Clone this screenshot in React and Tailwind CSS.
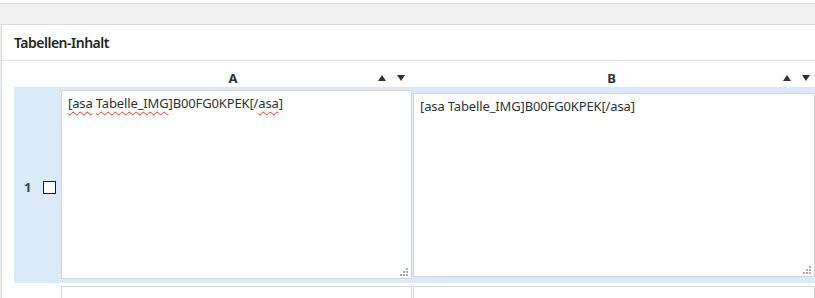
import React from 'react';

const font = { fontFamily: '"Noto Sans", "Open Sans", sans-serif' };

const Arrows = () => (
  <div className="flex items-center gap-[11px] justify-self-end">
    <svg width="8" height="6" viewBox="0 0 8 6">
      <path d="M4 0 L8 6 L0 6 Z" fill="#2c3338" />
    </svg>
    <svg width="8" height="6" viewBox="0 0 8 6">
      <path d="M0 0 L8 0 L4 6 Z" fill="#2c3338" />
    </svg>
  </div>
);

const Grip = () => (
  <svg width="8" height="8" viewBox="0 0 8 8" className="absolute right-[3px] bottom-[2px]">
    <rect x="6" y="0" width="2" height="2" fill="#a7aaad" />
    <rect x="3" y="3" width="2" height="2" fill="#a7aaad" />
    <rect x="6" y="3" width="2" height="2" fill="#a7aaad" />
    <rect x="0" y="6" width="2" height="2" fill="#a7aaad" />
    <rect x="3" y="6" width="2" height="2" fill="#a7aaad" />
    <rect x="6" y="6" width="2" height="2" fill="#a7aaad" />
  </svg>
);

const Typo = ({ children }) => (
  <span className="underline decoration-wavy decoration-[#e0312b] decoration-1 underline-offset-[3px]">{children}</span>
);

const Cell = ({ className, children }) => (
  <div className={`relative bg-white border border-[#d6d6d6] px-[6px] pt-[3px] text-[13px] leading-[18px] tracking-[-0.14px] text-[#2c3338] ${className}`}>
    {children}
    <Grip />
  </div>
);

export default function App() {
  return (
    <div className="w-[815px] h-[298px] overflow-hidden bg-[#f0f0f1]" style={font}>
      <div className="h-[4px] bg-white border-b border-[#dcdcde]" />
      <div className="mt-[20px] ml-px bg-white border-l border-t border-[#dcdcde] h-[300px]">
        <div className="h-[36px] flex items-center pl-[12px] border-b border-[#e4e4e7] text-[14px] font-semibold tracking-[-0.5px] text-[#1d2327]">
          Tabellen-Inhalt
        </div>
        <div className="pl-[12px]">
          <div className="grid grid-cols-[47px_352px_402px] h-[26px] pt-[7px] leading-[18px] text-[13px] font-bold text-[#2c3338]">
            <div />
            <div className="grid grid-cols-[1fr_auto_1fr] items-center pr-[8px]">
              <div />
              <div>A</div>
              <Arrows />
            </div>
            <div className="grid grid-cols-[1fr_auto_1fr] items-center pr-[5px]">
              <div />
              <div>B</div>
              <Arrows />
            </div>
          </div>
          <div className="grid grid-cols-[47px_352px_402px] h-[196px] bg-[#daeaf6]">
            <div className="flex items-center pl-[10px] gap-[12px] pt-[5px]">
              <span className="text-[13px] font-bold text-[#3c434a]">1</span>
              <span className="w-[13px] h-[13px] border border-[#1e1e1e] bg-white" />
            </div>
            <div className="pt-[3px]">
              <Cell className="w-[351px] h-[189px]">
                <Typo>[asa</Typo> <Typo>Tabelle_IMG</Typo>]B00FG0KPEK[/<Typo>asa</Typo>]
              </Cell>
            </div>
            <div className="pt-[6px]">
              <Cell className="w-[402px] h-[184px]">[asa Tabelle_IMG]B00FG0KPEK[/asa]</Cell>
            </div>
          </div>
          <div className="grid grid-cols-[47px_352px_402px] pt-[3px]">
            <div />
            <div className="w-[351px] h-[40px] bg-white border border-[#d6d6d6]" />
            <div className="w-[402px] h-[40px] bg-white border border-[#d6d6d6]" />
          </div>
        </div>
      </div>
    </div>
  );
}
